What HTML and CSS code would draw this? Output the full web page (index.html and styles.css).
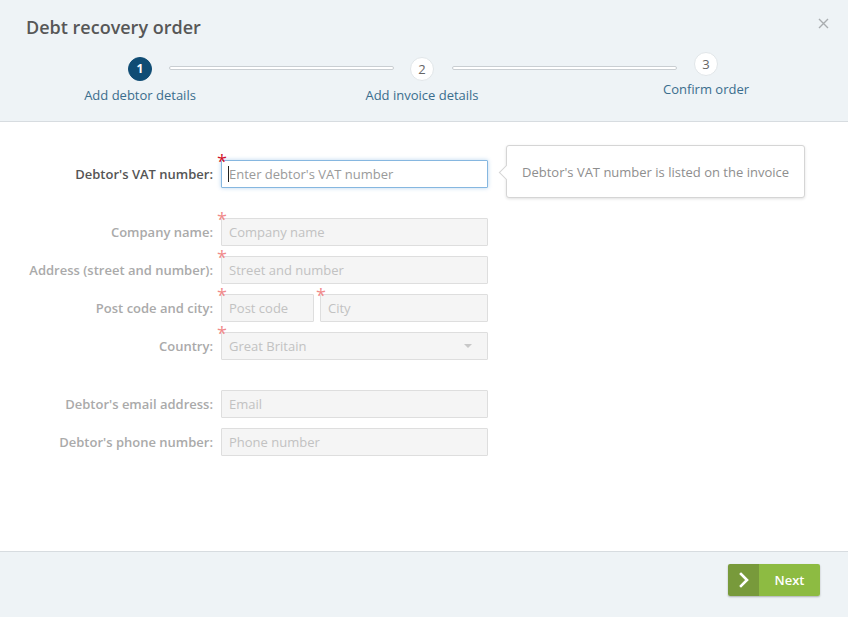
FILE: index.html
```html
<!DOCTYPE html>
<html lang="en">
<head>
<meta charset="utf-8">
<title>Debt recovery order</title>
<link rel="stylesheet" href="styles.css">
</head>
<body>
<div class="modal">
  <header class="head">
    <div class="title-row">
      <h1 class="title">Debt recovery order</h1>
      <button class="close" type="button" aria-label="Close">
        <svg width="11" height="11" viewBox="0 0 11 11"><path d="M1 1L10 10M10 1L1 10" stroke="#a9adb0" stroke-width="1.4" fill="none"/></svg>
      </button>
    </div>
    <div class="steps">
      <div class="step active"><span class="num">1</span><span class="step-label">Add debtor details</span></div>
      <span class="line line-a"></span>
      <div class="step"><span class="num">2</span><span class="step-label">Add invoice details</span></div>
      <span class="line line-b"></span>
      <div class="step step-last"><span class="num">3</span><span class="step-label">Confirm order</span></div>
    </div>
  </header>

  <main class="body">
    <div class="form">
      <div class="group">
        <div class="row">
          <label class="lbl lbl-active">Debtor's VAT number:</label>
          <div class="field req req-strong">
            <input class="inp inp-active" type="text" placeholder="Enter debtor's VAT number">
            <span class="cursor"></span>
            <div class="tip">Debtor's VAT number is listed on the invoice</div>
          </div>
        </div>
      </div>

      <div class="group">
        <div class="row">
          <label class="lbl">Company name:</label>
          <div class="field req"><input class="inp" type="text" placeholder="Company name" disabled></div>
        </div>
        <div class="row">
          <label class="lbl">Address (street and number):</label>
          <div class="field req"><input class="inp" type="text" placeholder="Street and number" disabled></div>
        </div>
        <div class="row">
          <label class="lbl">Post code and city:</label>
          <div class="split">
            <div class="field req postcode"><input class="inp" type="text" placeholder="Post code" disabled></div>
            <div class="field req city"><input class="inp" type="text" placeholder="City" disabled></div>
          </div>
        </div>
        <div class="row">
          <label class="lbl">Country:</label>
          <div class="field req"><div class="inp select">Great Britain<span class="caret"></span></div></div>
        </div>
      </div>

      <div class="group">
        <div class="row">
          <label class="lbl">Debtor's email address:</label>
          <div class="field"><input class="inp" type="text" placeholder="Email" disabled></div>
        </div>
        <div class="row">
          <label class="lbl">Debtor's phone number:</label>
          <div class="field"><input class="inp" type="text" placeholder="Phone number" disabled></div>
        </div>
      </div>
    </div>
  </main>

  <footer class="foot">
    <button class="next" type="button">
      <span class="next-icon"><svg width="10" height="16" viewBox="0 0 10 16"><path d="M2 2L8 8L2 14" stroke="#fff" stroke-width="2.6" fill="none" stroke-linecap="square"/></svg></span>
      <span class="next-text">Next</span>
    </button>
  </footer>
</div>
</body>
</html>
```

FILE: styles.css
```css
* { box-sizing: border-box; }
html, body { margin: 0; padding: 0; }
body {
  font-family: "Open Sans", "Noto Sans", sans-serif;
  font-size: 13px;
  color: #555;
  background: #fff;
}
.modal { width: 848px; height: 617px; display: flex; flex-direction: column; }

.head {
  height: 122px;
  background: #eef3f6;
  border-bottom: 1px solid #d7dce0;
}
.title-row {
  display: flex;
  justify-content: space-between;
  align-items: flex-start;
  padding: 15px 19px 0 26px;
}
.title {
  margin: 0;
  font-size: 18px;
  line-height: 24px;
  font-weight: 600;
  color: #575757;
}
.close {
  margin-top: 3px;
  padding: 0;
  border: 0;
  background: none;
  width: 11px;
  height: 11px;
  display: block;
}
.close svg { display: block; }

.steps {
  display: flex;
  align-items: flex-start;
  margin-top: 18px;
  padding-left: 128px;
}
.step {
  width: 24px;
  display: flex;
  flex-direction: column;
  align-items: center;
}
.num {
  width: 24px;
  height: 24px;
  border-radius: 50%;
  background: #fff;
  border: 1px solid #e1e6e9;
  color: #666;
  font-size: 13px;
  line-height: 22px;
  text-align: center;
}
.step.active .num {
  background: #0f4c74;
  border-color: #0f4c74;
  color: #fff;
  font-weight: 700;
  font-size: 12px;
}
.step-label {
  margin-top: 5px;
  white-space: nowrap;
  font-size: 13px;
  line-height: 18px;
  color: #3a6d8d;
}
.step-last { margin-top: -5px; }
.step-last .step-label { margin-top: 4px; }
.line {
  width: 225px;
  height: 4px;
  margin-top: 9px;
  background: #fff;
  border: 1px solid #c9ced2;
  border-radius: 3px;
}
.line-a { margin-left: 17px; margin-right: 16px; }
.line-b { margin-left: 18px; margin-right: 17px; }

.body {
  height: 429px;
  background: #fff;
  padding-top: 38px;
}
.form { width: 488px; }
.group { display: flex; flex-direction: column; gap: 10px; }
.group + .group { margin-top: 30px; }
.row {
  display: grid;
  grid-template-columns: 213px 267px;
  column-gap: 8px;
  align-items: center;
  height: 28px;
}
.lbl {
  text-align: right;
  font-weight: 600;
  color: #aaa;
  white-space: nowrap;
}
.lbl-active { color: #555; }

.field { position: relative; height: 28px; }
.req::before {
  content: "*";
  position: absolute;
  left: -4px;
  top: -8px;
  font-size: 18px;
  line-height: 18px;
  color: #f08a8a;
  z-index: 2;
}
.req-strong::before { color: #d2132b; }

.inp {
  display: block;
  width: 100%;
  height: 28px;
  margin: 0;
  padding: 0 7px;
  font-family: inherit;
  font-size: 13px;
  background: #f5f5f5;
  border: 1px solid #dedede;
  border-radius: 1px;
  color: #bbb;
  outline: none;
}
.inp::placeholder { color: #c2c2c2; }
.inp-active {
  background: #fff;
  border-color: #86b7e0;
  box-shadow: 0 0 4px rgba(102, 163, 220, 0.45);
}
.inp-active::placeholder { color: #9a9a9a; }
.cursor {
  position: absolute;
  left: 7px;
  top: 6px;
  width: 1px;
  height: 16px;
  background: #222;
}

.split { display: flex; gap: 6px; }
.postcode { width: 93px; }
.city { flex: 1; }

.select {
  display: flex;
  align-items: center;
  justify-content: space-between;
  line-height: 26px;
  color: #c2c2c2;
}
.caret {
  width: 0;
  height: 0;
  margin-right: 8px;
  border-left: 4px solid transparent;
  border-right: 4px solid transparent;
  border-top: 4px solid #c8c8c8;
}

.tip {
  position: absolute;
  left: calc(100% + 18px);
  top: -15px;
  width: 299px;
  height: 53px;
  padding: 0 15px;
  display: flex;
  align-items: center;
  white-space: nowrap;
  background: #fff;
  border: 1px solid #d5d5d5;
  border-radius: 3px;
  box-shadow: 0 1px 3px rgba(0, 0, 0, 0.12);
  color: #8e8e8e;
  font-size: 13px;
}
.tip::before {
  content: "";
  position: absolute;
  left: -6px;
  top: 21px;
  width: 10px;
  height: 10px;
  background: #fff;
  border-left: 1px solid #d5d5d5;
  border-bottom: 1px solid #d5d5d5;
  transform: rotate(45deg);
}

.foot {
  flex: 1;
  background: #eef3f6;
  border-top: 1px solid #d7dce0;
  display: flex;
  justify-content: flex-end;
  align-items: flex-start;
  padding: 12px 28px 0 0;
}
.next {
  display: flex;
  width: 92px;
  height: 32px;
  padding: 0;
  border: 0;
  border-radius: 2px;
  overflow: hidden;
  box-shadow: 0 1px 2px rgba(0, 0, 0, 0.28);
  font-family: inherit;
  cursor: pointer;
}
.next-icon {
  width: 31px;
  background: #789a3b;
  display: flex;
  align-items: center;
  justify-content: center;
}
.next-icon svg { display: block; }
.next-text {
  flex: 1;
  background: #8dbb42;
  color: #fff;
  font-size: 13px;
  font-weight: 600;
  display: flex;
  align-items: center;
  justify-content: center;
}
```
